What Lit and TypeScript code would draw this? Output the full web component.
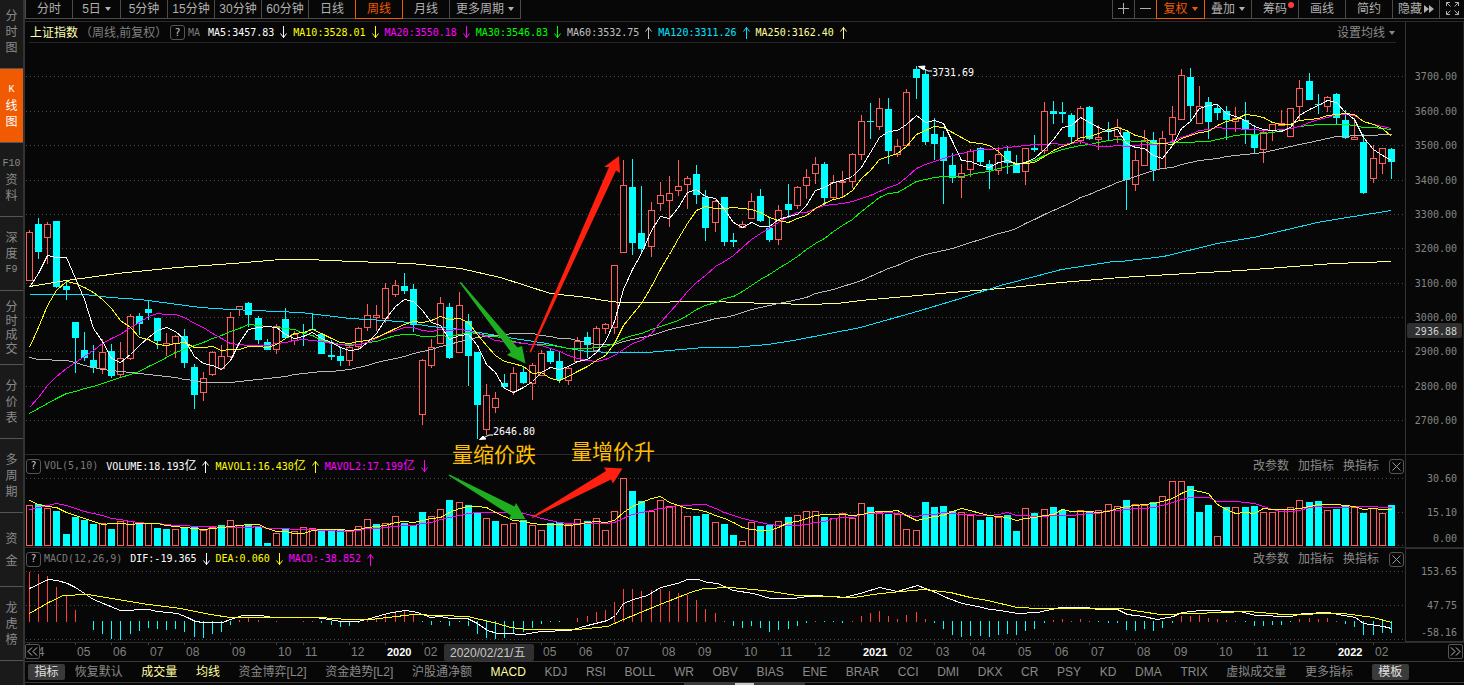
import { LitElement, html, svg, css } from "lit";
import { customElement } from "lit/decorators.js";
import { classMap } from "lit/directives/class-map.js";

type Point = [number, number];

/* Weekly bars: direction, body top, body bottom, high, low (plot units). */
const CANDLES = `
r 232 280 230 280|c 224 252 218 259|r 224 237 222 264|c 221 287 221 288|c 286 290 281 300|c 322 338 322 373
c 350 358 332 361|c 360 368 345 373|r 352 368 339 374|c 351 376 344 378|r 358 374 342 377|r 316 358 314 360
c 316 324 313 335|c 309 313 300 320|c 318 341 318 349|r 343 345 333 356|r 336 343 335 358|c 336 363 329 368
c 367 395 364 409|r 378 392 372 401|r 352 374 351 376|r 356 368 345 369|r 317 356 312 358|r 306 309 306 316
c 303 315 302 327|c 318 340 316 344|c 342 350 339 350|r 326 349 324 354|c 319 338 308 338|r 334 340 331 345
c 332 333 324 346|c 329 330 313 330|c 334 354 333 354|c 355 357 340 360|c 356 361 347 366|r 347 360 346 366
r 328 346 327 350|r 315 327 304 331|r 315 317 305 331|r 288 318 283 323|r 285 294 280 297|c 286 291 273 294
c 289 325 284 332|r 360 414 359 425|r 347 365 339 368|r 303 343 297 344|c 307 358 303 359|r 305 352 292 353
c 321 356 314 386|c 352 405 352 439|r 395 429 384 435|r 398 407 392 413|c 383 387 374 388|r 373 391 367 395
c 372 383 366 384|r 365 383 363 400|r 353 375 350 376|c 351 362 348 364|c 361 380 352 383|r 368 380 366 385
r 341 361 337 362|c 337 345 332 358|r 328 350 326 353|r 324 328 323 334|r 265 327 265 334|r 185 252 160 253
c 187 243 159 255|c 233 249 186 252|r 210 246 202 257|r 195 203 182 211|r 193 200 176 227|r 186 190 160 196
r 178 184 176 209|c 174 195 165 204|c 197 228 190 241|r 201 222 200 232|c 197 242 197 246|c 240 242 233 247
r 224 227 221 228|r 201 218 193 219|c 196 221 189 222|c 228 240 217 242|r 210 239 205 245|c 204 210 184 218
r 187 205 186 209|r 177 185 169 199|r 164 173 157 184|c 164 198 162 205|r 182 197 175 200|r 181 182 171 197
r 154 181 153 188|r 121 154 115 160|c 121 122 103 139|r 108 126 98 130|c 109 151 98 164|r 146 154 139 157
r 92 145 89 147|c 69 78 66 99|c 74 142 70 145|c 134 144 118 160|c 137 161 131 204|c 165 178 153 183
r 173 177 164 198|r 151 169 149 177|c 148 162 147 165|c 164 170 160 189|r 154 170 147 175|c 151 163 146 174
c 163 173 155 173|r 148 171 148 185|c 148 150 135 152|r 111 150 102 154|c 111 114 101 124|c 112 114 102 123
c 115 137 113 143|r 108 140 106 144|c 107 139 106 140|r 137 139 125 150|c 130 132 122 140|r 127 136 119 143
c 132 180 132 210|r 160 184 150 191|r 140 165 130 166|c 140 170 132 181|r 138 168 131 169|r 117 134 106 145
r 75 119 69 119|c 77 106 68 122|r 106 123 86 124|c 102 122 97 139|c 108 113 105 120|c 111 120 106 140
r 118 121 107 132|c 120 129 102 144|c 135 148 125 153|r 132 149 131 163|r 124 130 124 141|r 123 125 110 126
r 108 136 108 136|r 88 106 80 120|c 81 100 73 100|c 104 105 94 114|r 97 106 96 112|c 94 118 93 124
c 120 138 110 139|r 137 139 118 140|c 142 193 134 194|r 158 178 145 183|r 148 163 148 174|c 149 162 148 179`
  .trim()
  .split(/[|\n]/)
  .map((row) => {
    const [dir, ...v] = row.trim().split(" ");
    const [top, bottom, high, low] = v.map(Number);
    return { up: dir === "r", top, bottom, high, low, close: dir === "r" ? top : bottom };
  });

const VOLUME_TOPS = [
  505, 504, 508, 511, 534, 517, 520, 524, 523, 529, 521, 521, 522, 523, 528, 529, 529, 528, 527, 530, 527, 525, 520, 525, 525,
  527, 543, 533, 529, 531, 527, 528, 530, 530, 530, 531, 526, 519, 524, 523, 516, 523, 525, 512, 516, 509, 500, 502, 505, 512,
  518, 521, 524, 523, 520, 525, 530, 523, 522, 524, 519, 521, 518, 530, 511, 478, 491, 501, 511, 500, 506, 505, 516, 516, 514,
  522, 524, 535, 541, 522, 526, 525, 521, 517, 515, 511, 511, 517, 518, 513, 518, 503, 507, 512, 514, 514, 529, 530, 502, 507,
  506, 511, 512, 515, 520, 517, 517, 515, 531, 508, 513, 509, 507, 510, 518, 510, 512, 510, 504, 506, 500, 504, 505, 502, 496,
  481, 481, 486, 512, 505, 536, 507, 507, 507, 506, 512, 512, 509, 507, 500, 502, 501, 510, 509, 505, 507, 513, 508, 513, 505,
];

const MACD_BARS = [
  50, 48, 46, 35, 26, 12, 0, -9, -13, -18, -19, -13, -10, -7, -8, -9, -8, -11, -16, -17, -13, -11, -4, 2, 4,
  2, 0, 1, 0, 0, 1, 1, -2, -4, -6, -5, -2, 2, 4, 8, 11, 11, 7, -1, -4, -1, -5, -1, -5, -13,
  -17, -18, -17, -13, -11, -7, -3, -1, -1, 0, 4, 6, 10, 12, 20, 33, 33, 31, 32, 33, 31, 29, 27, 22, 13,
  9, 1, -5, -7, -5, -7, -11, -9, -8, -5, -2, 1, -1, -1, -2, 1, 6, 9, 11, 6, 3, 7, 10, 3, -2,
  -8, -14, -16, -15, -15, -16, -14, -13, -14, -10, -8, -2, 2, 3, 1, 3, 1, -1, -2, -2, -9, -10, -8, -10, -7,
  -2, 6, 6, 7, 4, 3, 2, 1, -1, -5, -5, -4, -4, -1, 3, 4, 3, 4, 1, -3, -6, -14, -14, -12, -12,
];

const barX = (i: number) => 29 + Math.round(i * 9.14);

/* Linear interpolation of [index, value] keys, one value per index. */
const spread = (keys: Point[], count: number): number[] => {
  const out: number[] = [];
  for (let i = 0; i < count; i++) {
    let k = 0;
    while (k < keys.length - 2 && keys[k + 1][0] < i) k++;
    const [a, b] = [keys[k], keys[k + 1]];
    out.push(a[1] + ((b[1] - a[1]) * (i - a[0])) / (b[0] - a[0]));
  }
  return out;
};

const average = (values: number[], span: number, seed: number[]): Point[] =>
  values.map((_, i) => {
    if (i < span - 1) return [barX(i), seed[i]];
    let sum = 0;
    for (let k = i - span + 1; k <= i; k++) sum += values[k];
    return [barX(i), sum / span];
  });

const CLOSES = CANDLES.map((c) => c.close);

const MA120: Point[] = [
  [29, 294], [84, 294], [110, 297], [140, 299], [200, 307], [230, 309], [300, 312], [350, 318], [400, 321], [430, 326],
  [460, 329], [485, 333], [513, 338], [547, 343], [562, 347], [587, 351], [613, 352], [647, 352], [703, 347], [733, 347],
  [767, 344], [793, 340], [860, 327], [920, 310], [960, 298], [1000, 285], [1061, 269], [1113, 261], [1120, 261],
  [1163, 256], [1217, 243], [1253, 237], [1317, 222], [1353, 216], [1391, 210],
];
const MA250: Point[] = [
  [29, 286], [66, 280], [117, 273], [177, 267], [233, 263], [280, 259], [307, 259], [353, 261], [410, 263], [460, 268],
  [500, 277], [550, 293], [587, 297], [603, 300], [620, 302], [663, 302], [677, 301], [717, 301], [733, 302], [773, 303],
  [807, 304], [837, 303], [860, 300], [940, 293], [1000, 288], [1061, 282], [1120, 277], [1187, 273], [1240, 270],
  [1280, 267], [1333, 263], [1391, 261],
];
const DIF: Point[] = [
  [29, 588], [48, 579], [57, 580], [67, 583], [75, 587], [93, 599], [120, 610], [148, 609], [157, 611], [177, 613],
  [187, 617], [195, 621], [203, 622], [222, 622], [233, 618], [242, 615], [260, 615], [273, 617], [313, 617], [323, 618],
  [340, 621], [358, 621], [373, 617], [387, 613], [405, 610], [417, 612], [430, 617], [440, 616], [450, 618], [467, 618],
  [477, 623], [487, 630], [497, 633], [505, 633], [523, 634], [540, 631], [570, 630], [587, 625], [607, 620], [615, 615],
  [623, 603], [633, 599], [647, 595], [660, 587], [677, 583], [687, 579], [698, 579], [707, 582], [717, 583], [733, 590],
  [753, 593], [770, 598], [793, 598], [815, 595], [843, 597], [860, 593], [879, 587], [897, 591], [917, 585], [933, 591],
  [948, 598], [962, 603], [977, 606], [990, 609], [1000, 610], [1017, 613], [1037, 612], [1060, 607], [1087, 607],
  [1097, 609], [1117, 609], [1127, 614], [1143, 616], [1157, 619], [1173, 616], [1182, 612], [1200, 610], [1240, 611],
  [1255, 615], [1290, 616], [1303, 613], [1328, 612], [1343, 615], [1355, 617], [1363, 623], [1383, 626], [1391, 628],
];
const DEA: Point[] = [
  [29, 613], [48, 602], [63, 595], [87, 594], [117, 599], [148, 604], [180, 608], [210, 614], [230, 617], [247, 617],
  [320, 617], [347, 619], [370, 619], [413, 614], [467, 616], [480, 619], [497, 623], [510, 627], [527, 629], [577, 629],
  [607, 626], [623, 619], [657, 605], [690, 592], [703, 588], [730, 587], [763, 590], [797, 595], [853, 597], [880, 593],
  [923, 589], [950, 592], [970, 597], [987, 600], [1017, 607], [1040, 608], [1120, 608], [1160, 614], [1193, 613],
  [1247, 611], [1283, 614], [1343, 613], [1373, 617], [1391, 622],
];

const PRICE_LINES: { tone: string; points: Point[] }[] = [
  { tone: "pale", points: MA250 },
  { tone: "aqua", points: MA120 },
  {
    tone: "grey",
    points: average(CLOSES, 60, spread([[0, 357], [1, 359], [4, 360], [8, 369], [12, 373], [16, 377], [19, 382], [22, 382], [26, 378], [30, 373], [35, 369], [39, 360], [43, 351], [47, 341], [49, 337], [51, 335], [53, 333], [55, 333], [58, 338]], 59)),
  },
  { tone: "green", points: average(CLOSES, 30, spread([[0, 413], [4, 393], [8, 383], [12, 371], [16, 352], [20, 338], [24, 324], [28, 328]], 29)) },
  { tone: "pink", points: average(CLOSES, 20, [407, 397, 385, 376, 368, 362, 356, 350, 343, 338, 334, 327, 322, 316, 313, 314, 314, 317, 323]) },
  { tone: "yellow", points: average(CLOSES, 10, [347, 327, 305, 290, 281, 283, 287, 292, 299]) },
  { tone: "white", points: average(CLOSES, 5, [287, 273, 255, 257]) },
];
const VOLUME_LINES: { tone: string; points: Point[] }[] = [
  { tone: "pink", points: average(VOLUME_TOPS, 10, [509, 507, 505, 503, 505, 508, 511, 513, 515]) },
  { tone: "yellow", points: average(VOLUME_TOPS, 5, [500, 504, 506, 507]) },
];
const MACD_LINES = [
  { tone: "white", points: DIF },
  { tone: "yellow", points: DEA },
];

const MONTHS: [number, string][] = [
  [0, "04"], [5, "05"], [9, "06"], [13, "07"], [17, "08"], [22, "09"], [27, "10"], [30, "11"], [35, "12"], [39, "2020"],
  [43, "02"], [56, "05"], [60, "06"], [64, "07"], [69, "08"], [73, "09"], [78, "10"], [82, "11"], [86, "12"], [91, "2021"],
  [95, "02"], [99, "03"], [103, "04"], [108, "05"], [112, "06"], [116, "07"], [121, "08"], [125, "09"], [130, "10"],
  [134, "11"], [138, "12"], [143, "2022"], [147, "02"],
];

const SIDE = [
  { rows: ["分", "时", "图"] },
  { rows: ["K", "线", "图"], active: true },
  { rows: ["F10", "资", "料"] },
  { rows: ["深", "度", "F9"] },
  { rows: ["分", "时", "成", "交"] },
  { rows: ["分", "价", "表"] },
  { rows: ["多", "周", "期"] },
  { rows: ["资", "金"] },
  { rows: ["龙", "虎", "榜"] },
];

const PERIODS = ["分时", "5日", "5分钟", "15分钟", "30分钟", "60分钟", "日线", "周线", "月线", "更多周期"];

const INDICATORS: [string, string][] = [
  ["指标", "chip"], ["恢复默认", ""], ["成交量", "on"], ["均线", "on"], ["资金博弈[L2]", ""], ["资金趋势[L2]", ""],
  ["沪股通净额", ""], ["MACD", "on"], ["KDJ", ""], ["RSI", ""], ["BOLL", ""], ["WR", ""], ["OBV", ""], ["BIAS", ""],
  ["ENE", ""], ["BRAR", ""], ["CCI", ""], ["DMI", ""], ["DKX", ""], ["CR", ""], ["PSY", ""], ["KD", ""], ["DMA", ""],
  ["TRIX", ""], ["虚拟成交量", ""], ["更多指标", ""], ["模板", "chip"],
];

type Readout = [string, string, "up" | "down"];

const PLOT_LEFT = 25;
const PLOT_WIDTH = 1380;
const pct = (x: number) => `${((x - PLOT_LEFT) / PLOT_WIDTH) * 100}%`;

const grid = (rows: number[]) =>
  rows.map((y) => svg`<line class="grid" x1="26" x2="1403" y1=${y + 0.5} y2=${y + 0.5}></line>`);

const lines = (list: { tone: string; points: Point[] }[]) =>
  list.map(
    ({ tone, points }) =>
      svg`<polyline class="curve ${tone}" points=${points.map(([x, y]) => `${x + 0.5},${Math.round(y) + 0.5}`).join(" ")}></polyline>`
  );

const block = (i: number, up: boolean, top: number, bottom: number) =>
  up
    ? svg`<rect class="rise" x=${barX(i) - 2.5} y=${top + 0.5} width="6" height=${Math.max(1, bottom - top)}></rect>`
    : svg`<rect class="fall" x=${barX(i) - 3} y=${top} width="7" height=${Math.max(1, bottom - top)}></rect>`;

const candles = CANDLES.map((c, i) => {
  const x = barX(i);
  return svg`
    <rect class=${c.up ? "rise-wick" : "fall"} x=${x} y=${c.high} width="1" height=${Math.max(0, c.top - c.high)}></rect>
    <rect class=${c.up ? "rise-wick" : "fall"} x=${x} y=${c.bottom} width="1" height=${Math.max(0, c.low - c.bottom)}></rect>
    ${block(i, c.up, c.top, c.bottom)}`;
});

const volumes = VOLUME_TOPS.map((top, i) => {
  const up = i === 0 || CLOSES[i] < CLOSES[i - 1];
  return block(i, up, top, up ? 545 : 546);
});

const macdBars = MACD_BARS.map((v, i) =>
  v > 0
    ? svg`<rect class="hist-up" x=${barX(i)} y=${622 - v} width="1" height=${v}></rect>`
    : v < 0
      ? svg`<rect class="fall" x=${barX(i)} y="621" width="1" height=${-v}></rect>`
      : ""
);

@customElement("app-root")
export class AppRoot extends LitElement {
  static styles = css`
    :host {
      display: grid;
      grid-template-columns: 25px minmax(0, 1fr);
      height: 100vh;
      overflow: hidden;
      background: #070707;
      color: #8a8a8a;
      font: 12px/16px "Liberation Sans", "Noto Sans CJK SC", sans-serif;
    }
    * {
      box-sizing: border-box;
    }
    button {
      margin: 0;
      padding: 0;
      border: 0;
      background: none;
      color: inherit;
      font: inherit;
      white-space: nowrap;
      cursor: pointer;
    }
    svg {
      display: block;
    }

    .side {
      display: flex;
      flex-direction: column;
      margin-top: -5px;
      background: #1a1a1a;
      border-right: 2px solid #333;
    }
    .side button {
      display: flex;
      flex-direction: column;
      align-items: center;
      justify-content: center;
      height: 74px;
      padding-top: 1px;
      border-bottom: 1px solid #555;
    }
    .side .two {
      gap: 6px;
    }
    .side .four {
      line-height: 14px;
    }
    .side .code {
      font-family: "Liberation Mono", monospace;
      font-size: 10px;
    }
    .side .active {
      background: #f05a00;
      color: #fff;
    }

    .main {
      display: flex;
      flex-direction: column;
      min-width: 0;
    }
    .toolbar {
      display: flex;
      justify-content: space-between;
      height: 22px;
      border-bottom: 1px solid #2b2b2b;
      color: #b0b0b0;
    }
    .group {
      display: flex;
      height: 19px;
      border-left: 1px solid #4a4a4a;
    }
    .group button {
      display: flex;
      align-items: center;
      justify-content: center;
      gap: 4px;
      width: 47px;
      padding-bottom: 1px;
      border: solid #4a4a4a;
      border-width: 0 1px 1px 0;
    }
    .group .drop {
      width: 48px;
    }
    .group .more {
      width: 71px;
    }
    .group .icon {
      width: 22px;
    }
    .group .icon.wide {
      width: 24px;
      border-right: 0;
    }
    .group .active {
      margin-left: -1px;
      width: 48px;
      border: 1px solid #f05a00;
      border-top: 0;
      color: #f05a00;
    }
    .group .active.drop {
      width: 49px;
    }
    .caret {
      width: 0;
      border: 3px solid transparent;
      border-top: 4px solid currentColor;
      border-bottom: 0;
    }
    .flag {
      position: relative;
    }
    .flag::after {
      content: "";
      position: absolute;
      top: 2px;
      right: 4px;
      width: 6px;
      height: 6px;
      border-radius: 50%;
      background: #ff3b3b;
    }
    .group .tight {
      gap: 2px;
    }

    .charts {
      position: relative;
    }
    .panel {
      display: grid;
      grid-template-columns: minmax(0, 1fr) 59px;
      border-bottom: 1px solid #2b2b2b;
    }
    .head {
      display: flex;
      align-items: center;
      height: 21px;
      padding: 1px 1px 0;
      white-space: nowrap;
    }
    .price .head {
      margin: 0 9px 0 4px;
      border-bottom: 1px solid #262626;
    }
    .title {
      color: #ffffb0;
    }
    .sub {
      margin-left: 2px;
      width: 90px;
      color: #808080;
    }
    .help,
    .close {
      display: grid;
      place-items: center;
      width: 15px;
      height: 15px;
      border: 1px solid #555;
      border-radius: 3px;
      color: #ccc;
      font: 10px/12px "DejaVu Sans Mono", monospace;
    }
    .name,
    .readout {
      font-family: "DejaVu Sans Mono", "Noto Sans CJK SC", monospace;
      font-size: 10px;
    }
    .name {
      margin: 0 8px 0 3px;
      color: #7a7a7a;
    }
    .unit {
      font-size: 12px;
    }
    .readout {
      display: flex;
      align-items: center;
      gap: 5px;
      margin-right: 5px;
    }
    .tools {
      display: flex;
      align-items: center;
      gap: 9px;
      margin-left: auto;
      color: #8a8a8a;
    }
    .tools .close {
      margin-left: 1px;
    }
    .tools .set {
      display: flex;
      align-items: center;
      gap: 4px;
    }
    .text-white { color: #fff; }
    .text-yellow { color: #ff0; }
    .text-pink { color: #f0f; }
    .text-green { color: #0f0; }
    .text-grey { color: #c0c0c0; }
    .text-aqua { color: #00e5ff; }
    .text-pale { color: #ffff99; }

    .plot {
      width: 100%;
      shape-rendering: crispEdges;
    }
    .h-price { height: 411px; }
    .h-volume { height: 71px; }
    .h-macd { height: 73px; }
    .grid {
      stroke: #4c4c4c;
      stroke-dasharray: 1 3;
    }
    .curve {
      fill: none;
      stroke-width: 1;
      vector-effect: non-scaling-stroke;
    }
    .white { stroke: #fff; }
    .yellow { stroke: #ff0; }
    .pink { stroke: #f0f; }
    .green { stroke: #0f0; }
    .grey { stroke: #b8b8b8; }
    .aqua { stroke: #00e5ff; }
    .pale { stroke: #ffff8c; }
    .rise {
      fill: #070707;
      stroke: #ff5c5c;
    }
    .rise-wick { fill: #ff5c5c; }
    .hist-up { fill: #ff3c3c; }
    .fall { fill: #0ff; }

    .scale {
      width: 59px;
      height: 0;
      min-height: 100%;
      border-left: 1px solid #333;
      border-right: 1px solid #222;
    }
    .macd .scale {
      border: 1px solid #333;
    }
    .scale text,
    .mark {
      fill: #858585;
      font: 10px "DejaVu Sans Mono", monospace;
    }
    .scale text {
      text-anchor: end;
    }
    .scale .tag {
      fill: #303030;
    }
    .scale .now {
      fill: #d0d0d0;
    }
    .mark {
      fill: #fff;
    }
    .overlay {
      position: absolute;
      inset: 0;
      width: calc(100% - 59px);
      height: 100%;
      pointer-events: none;
    }
    .pointer {
      fill: #fff;
      stroke: #fff;
    }
    .pointer-line {
      fill: none;
      stroke: #fff;
    }
    .down-arrow { fill: #1fae1f; }
    .up-arrow { fill: #ff2010; }
    .note {
      fill: #ffbf00;
      font: 21px "Noto Sans CJK SC", sans-serif;
    }

    .dates {
      position: relative;
      display: grid;
      grid-template-columns: minmax(0, 1fr) 59px;
      height: 19px;
      border-bottom: 1px solid #3a3a3a;
    }
    .dates svg.axis {
      width: 100%;
      height: 18px;
    }
    .axis line {
      stroke: #444;
      shape-rendering: crispEdges;
    }
    .axis text {
      fill: #808080;
      font: 12px "Liberation Sans", sans-serif;
    }
    .axis .year {
      fill: #fff;
      font-weight: bold;
      font-size: 11px;
    }
    .axis .cursor {
      fill: #303030;
    }
    .axis .picked {
      fill: #c8c8c8;
      font-family: "Liberation Sans", "Noto Sans CJK SC", sans-serif;
    }
    .page {
      display: grid;
      place-items: center;
      width: 15px;
      height: 15px;
      border: 1px solid #555;
      border-radius: 2px;
      background: #070707;
      color: #c0c0c0;
    }
    .page.prev {
      position: absolute;
      left: 0;
      top: 1px;
    }
    .page.next {
      justify-self: end;
      margin: 1px 1px 0 0;
    }

    .indicators {
      display: flex;
      align-items: center;
      justify-content: space-between;
      height: 21px;
      padding: 0 55px 0 3px;
      border-bottom: 1px solid #3a3a3a;
    }
    .indicators .on {
      color: #ffffa0;
    }
    .indicators .chip {
      width: 37px;
      height: 16px;
      background: #3a3a3a;
      border-radius: 2px;
      color: #e0e0e0;
    }
    .indicators .chip:first-child {
      margin-right: -9px;
    }
    .grip {
      align-self: center;
      display: flex;
      justify-content: center;
      width: 121px;
      height: 2px;
      background: #3a3a3a;
    }
    .grip span {
      width: 19px;
      background: #c8c8c8;
    }
  `;

  private arrow(dir: "up" | "down") {
    return html`<svg width="9" height="13" viewBox="0 0 9 13" fill="none" stroke="currentColor" aria-hidden="true">
      ${dir === "down" ? svg`<path d="M4.500 0V12M1.500 7.500L4.500 11.500L7.500 7.500"></path>` : svg`<path d="M4.500 1V13M1.500 5.500L4.500 1.500L7.500 5.500"></path>`}
    </svg>`;
  }

  private readout([text, tone, dir]: Readout) {
    const unit = text.endsWith("亿");
    return html`<span class="readout text-${tone}"
      ><span>${unit ? text.slice(0, -1) : text}${unit ? html`<span class="unit">亿</span>` : ""}</span>${this.arrow(dir)}</span
    >`;
  }

  private panelTools() {
    return html`<div class="tools">
      <button>改参数</button><button>加指标</button><button>换指标</button>
      <button class="close" aria-label="关闭">
        <svg width="9" height="9" viewBox="0 0 9 9" stroke="#999" aria-hidden="true"><path d="M.5 .5L8.500 8.500M8.500 .5L.5 8.500"></path></svg>
      </button>
    </div>`;
  }

  private scale(top: number, labels: [number, string][], tag?: [number, string]) {
    return html`<svg class="scale">
      ${tag
        ? svg`<rect class="tag" x="1" y=${tag[0] - top - 8} width="55" height="15" rx="2"></rect>
              <text class="now" x="51" y=${tag[0] - top + 4}>${tag[1]}</text>`
        : ""}
      ${labels.map(([y, t]) => svg`<text x="51" y=${y - top + 4}>${t}</text>`)}
    </svg>`;
  }

  private toolbar() {
    return html`<div class="toolbar">
      <div class="group">
        ${PERIODS.map((p) => {
          const drop = p === "5日" || p === "更多周期";
          return html`<button class=${classMap({ active: p === "周线", drop: p === "5日", more: p === "更多周期" })}>
            ${p}${drop ? html`<span class="caret"></span>` : ""}
          </button>`;
        })}
      </div>
      <div class="group">
        <button class="icon" aria-label="放大">
          <svg width="11" height="11" viewBox="0 0 11 11" stroke="currentColor"><path d="M5.500 0V11M0 5.500H11"></path></svg>
        </button>
        <button class="icon" aria-label="缩小">
          <svg width="11" height="11" viewBox="0 0 11 11" stroke="currentColor"><path d="M0 5.500H11"></path></svg>
        </button>
        <button class="active drop">复权<span class="caret"></span></button>
        <button>叠加<span class="caret"></span></button>
        <button class="flag">筹码</button>
        <button>画线</button>
        <button>简约</button>
        <button class="tight">
          隐藏<svg width="10" height="8" viewBox="0 0 10 8" fill="currentColor"><path d="M0 0L5 4L0 8ZM5 0L10 4L5 8Z"></path></svg>
        </button>
        <button class="icon wide" aria-label="全屏">
          <svg width="13" height="13" viewBox="0 0 13 13" fill="none" stroke="currentColor">
            <path d="M.5 4V.5H4M.5 .5L4.500 4.500M9 .5H12.500V4M12.500 .5L8.500 4.500M.5 9V12.500H4M.5 12.500L4.500 8.500M9 12.500H12.500V9M12.500 12.500L8.500 8.500"></path>
          </svg>
        </button>
      </div>
    </div>`;
  }

  private overlay() {
    return html`<svg class="overlay" aria-hidden="true">
      <svg x="0" y="0" width="100%" height="620" viewBox="25 22 1380 620" preserveAspectRatio="none">
        <path class="down-arrow" d="M459.500 282.500L461 282L517.500 347.500L522 346L525.500 363.500L507 355L511 352Z"></path>
        <path class="up-arrow" d="M529.500 352L531 352.500L616 170.500L620 173L619 156L604 167L609 167Z"></path>
        <path class="down-arrow" d="M448.500 475.500L449.500 474.500L514.500 506.500L516 503L525.500 519L508.500 519L511 515.500Z"></path>
        <path class="up-arrow" d="M531.500 517L532.500 518L611 479.500L613 483.500L622.500 468.500L604 467.500L606 471Z"></path>
        <path class="pointer" d="M918.500 66.500L925 66L924 70Z"></path>
        <path class="pointer-line" d="M923 68L928 71H932"></path>
        <path class="pointer" d="M479.500 439.500L483 436L486 439Z"></path>
        <path class="pointer-line" d="M483 438L489 435H493"></path>
      </svg>
      <text class="mark" x=${pct(932)} y="54">3731.69</text>
      <text class="mark" x=${pct(493)} y="413">2646.80</text>
      <text class="note" x=${pct(452)} y="440">量缩价跌</text>
      <text class="note" x=${pct(571)} y="437">量增价升</text>
    </svg>`;
  }

  private charts() {
    const ma: Readout[] = [
      ["MA5:3457.83", "white", "down"],
      ["MA10:3528.01", "yellow", "down"],
      ["MA20:3550.18", "pink", "down"],
      ["MA30:3546.83", "green", "down"],
      ["MA60:3532.75", "grey", "up"],
      ["MA120:3311.26", "aqua", "up"],
      ["MA250:3162.40", "pale", "up"],
    ];
    const vol: Readout[] = [
      ["VOLUME:18.193亿", "white", "up"],
      ["MAVOL1:16.430亿", "yellow", "up"],
      ["MAVOL2:17.199亿", "pink", "down"],
    ];
    const macd: Readout[] = [
      ["DIF:-19.365", "white", "down"],
      ["DEA:0.060", "yellow", "down"],
      ["MACD:-38.852", "pink", "up"],
    ];
    return html`<div class="charts">
      <section class="panel price">
        <div>
          <div class="head">
            <span class="title">上证指数</span><span class="sub">（周线,前复权）</span>
            <button class="help" aria-label="帮助">?</button>
            <span class="name">MA</span>${ma.map((r) => this.readout(r))}
            <div class="tools"><button class="set">设置均线<span class="caret"></span></button></div>
          </div>
          <svg class="plot h-price" viewBox="25 43 1380 411" preserveAspectRatio="none">
            ${grid([76, 111, 145, 180, 214, 248, 283, 317, 351, 386, 420])}${candles}${lines(PRICE_LINES)}
          </svg>
        </div>
        ${this.scale(
          22,
          [[76, "3700.00"], [111, "3600.00"], [145, "3500.00"], [180, "3400.00"], [214, "3300.00"], [248, "3200.00"], [283, "3100.00"], [317, "3000.00"], [351, "2900.00"], [386, "2800.00"], [420, "2700.00"]],
          [331, "2936.88"]
        )}
      </section>
      <section class="panel sub-panel">
        <div>
          <div class="head">
            <button class="help" aria-label="帮助">?</button><span class="name">VOL(5,10)</span>${vol.map((r) => this.readout(r))}
            ${this.panelTools()}
          </div>
          <svg class="plot h-volume" viewBox="25 476 1380 71" preserveAspectRatio="none">
            ${grid([478, 512, 545])}${volumes}${lines(VOLUME_LINES)}
          </svg>
        </div>
        ${this.scale(455, [[478, "30.60"], [512, "15.10"], [538, "0.00"]])}
      </section>
      <section class="panel sub-panel macd">
        <div>
          <div class="head">
            <button class="help" aria-label="帮助">?</button><span class="name">MACD(12,26,9)</span>${macd.map((r) => this.readout(r))}
            ${this.panelTools()}
          </div>
          <svg class="plot h-macd" viewBox="25 569 1380 73" preserveAspectRatio="none">
            ${grid([571, 605, 639])}${macdBars}${lines(MACD_LINES)}
          </svg>
        </div>
        ${this.scale(549, [[571, "153.65"], [605, "47.75"], [632, "-58.16"]])}
      </section>
      ${this.overlay()}
    </div>`;
  }

  private dates() {
    return html`<div class="dates">
      <svg class="axis">
        ${MONTHS.map(
          ([i, label]) => svg`
            <line x1=${pct(barX(i) + 0.5)} x2=${pct(barX(i) + 0.5)} y1="0" y2="2"></line>
            <text class=${label.length > 2 ? "year" : ""} x=${pct(barX(i))} dx="2" y="13">${label}</text>`
        )}
        <rect class="cursor" x=${pct(444)} y="1" width="90" height="17" rx="2"></rect>
        <text class="picked" x=${pct(450)} y="14">2020/02/21/五</text>
      </svg>
      <button class="page prev" aria-label="向前">
        <svg width="11" height="9" viewBox="0 0 11 9" fill="none" stroke="currentColor"><path d="M5 .5L1 4.500L5 8.500M10 .5L6 4.500L10 8.500"></path></svg>
      </button>
      <button class="page next" aria-label="向后">
        <svg width="11" height="9" viewBox="0 0 11 9" fill="none" stroke="currentColor"><path d="M1 .5L5 4.500L1 8.500M6 .5L10 4.500L6 8.500"></path></svg>
      </button>
    </div>`;
  }

  render() {
    return html`
      <nav class="side">
        ${SIDE.map(
          ({ rows, active }) => html`<button class=${classMap({ active: !!active, two: rows.length === 2, four: rows.length === 4 })}>
            ${rows.map((r) => html`<span class=${/[A-Z]/.test(r) ? "code" : ""}>${r}</span>`)}
          </button>`
        )}
      </nav>
      <div class="main">
        ${this.toolbar()} ${this.charts()} ${this.dates()}
        <div class="indicators">${INDICATORS.map(([name, kind]) => html`<button class=${kind}>${name}</button>`)}</div>
        <div class="grip"><span></span></div>
      </div>
    `;
  }
}
